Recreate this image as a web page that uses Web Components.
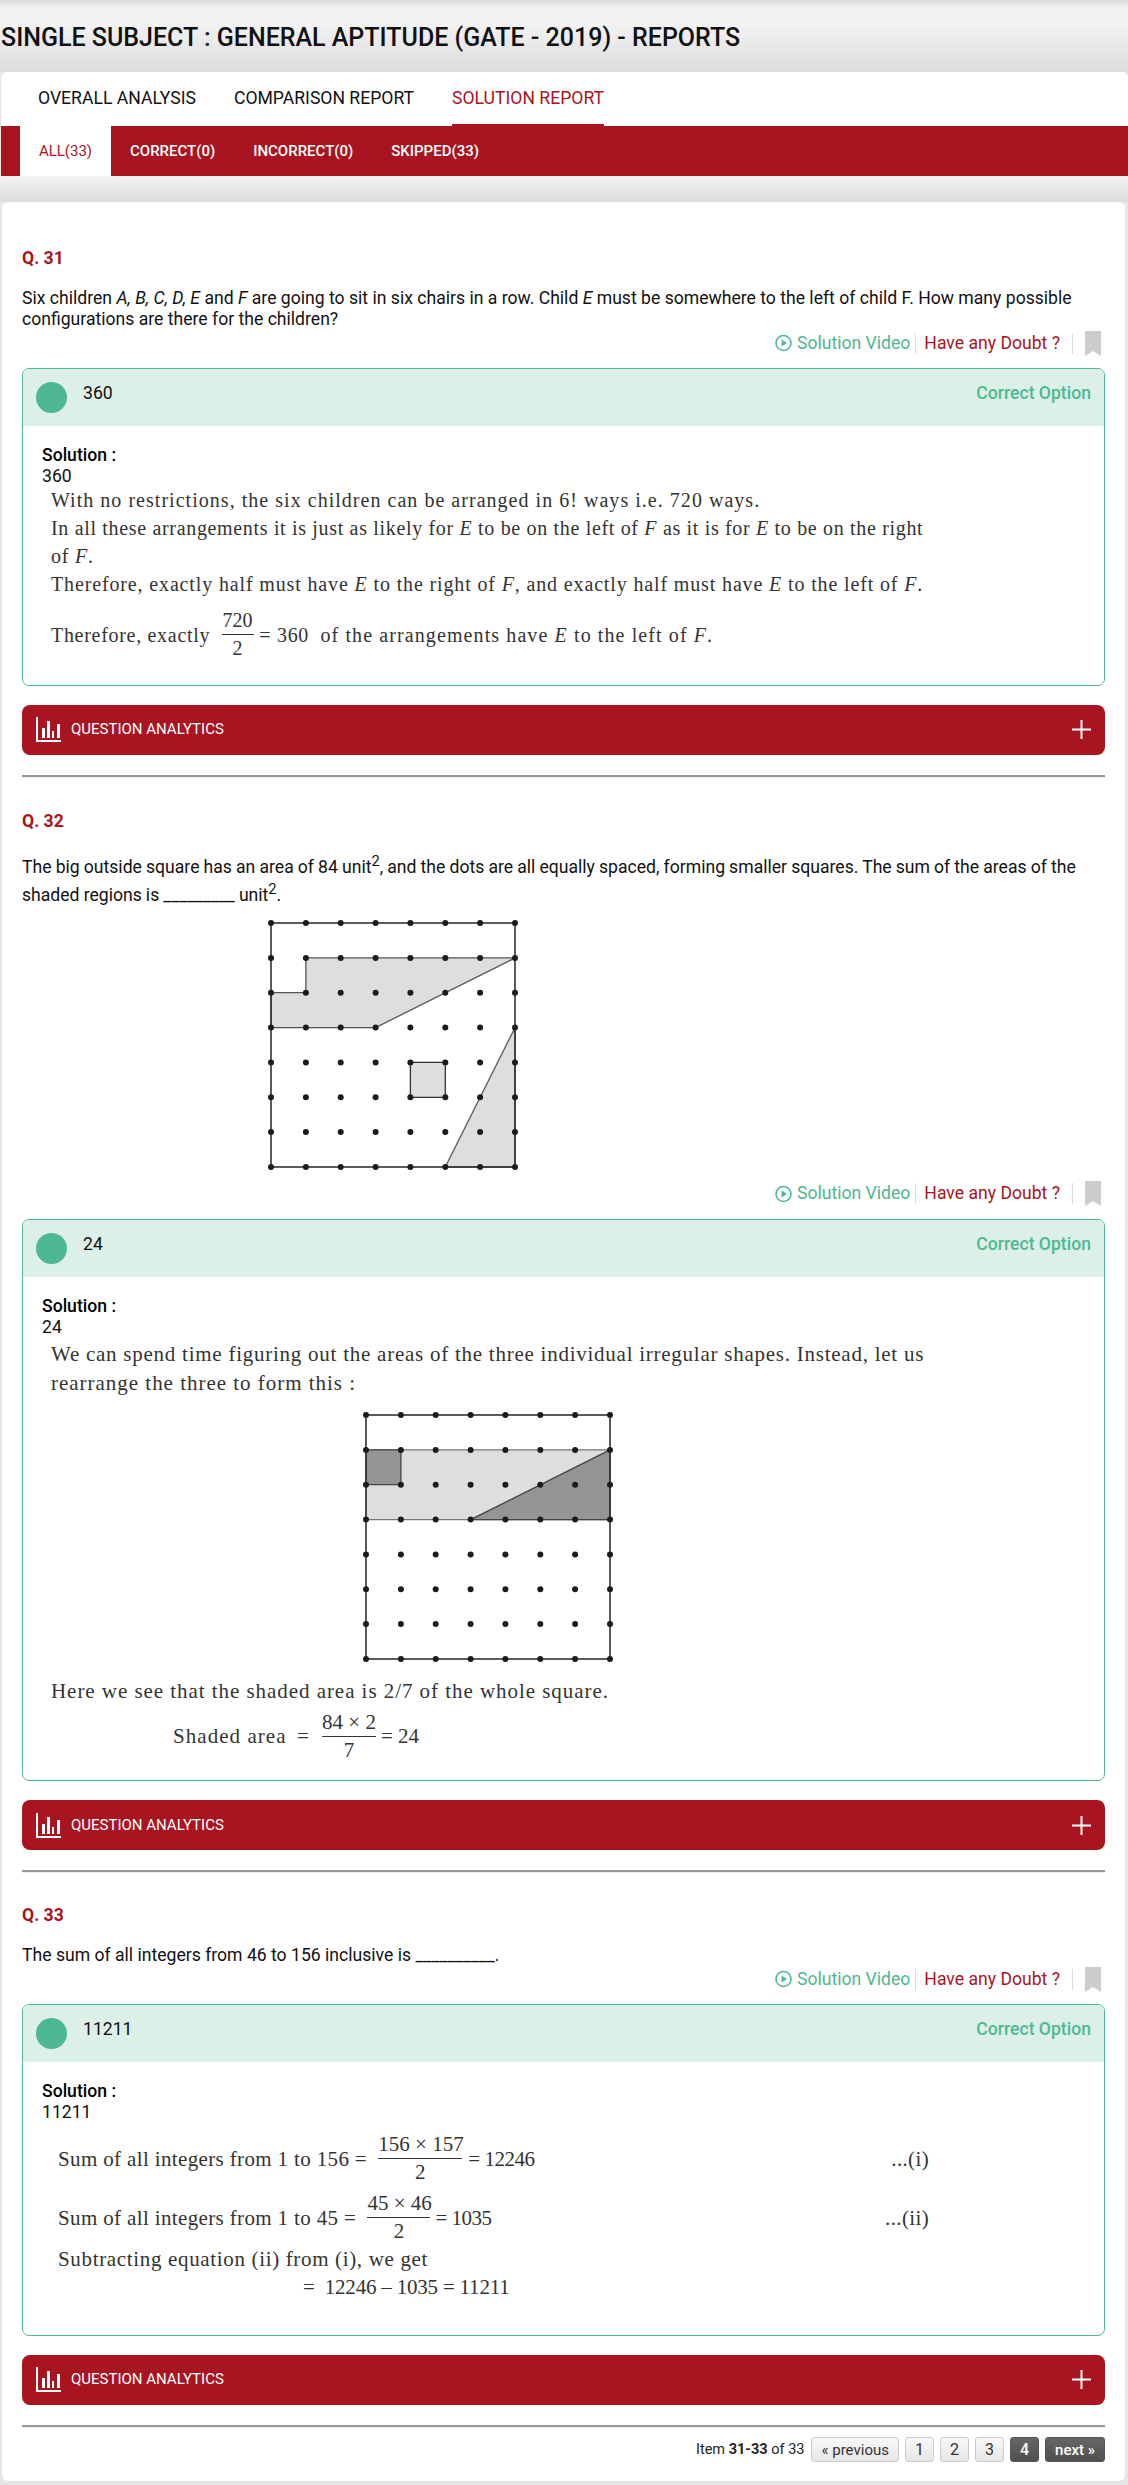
<!DOCTYPE html>
<html>
<head>
<meta charset="utf-8">
<title>Reports</title>
<style>
    html, body { margin: 0; padding: 0; }
    body {
        background: #e6e6e6;
        font-family: Roboto, "Liberation Sans", sans-serif;
        color: #111;
    }
    sup { line-height: 0; }
</style>
</head>
<body>
<report-page>
    <report-tabs></report-tabs>
    <report-subtabs></report-subtabs>

    <report-card>
        <question-item label="Q. 31" top="46">
            <p>Six children <i>A, B, C, D, E</i> and <i>F</i> are going to sit in six chairs in a row. Child <i>E</i> must be somewhere to the left of child F. How many possible configurations are there for the children?</p>
            <answer-box answer="360" slot="answer" pad="22.5">
                <sol-line size="20" sp="1.03" top="-1">With no restrictions, the six children can be arranged in 6! ways i.e. 720 ways.</sol-line>
                <sol-line size="20" sp="0.67">In all these arrangements it is just as likely for <i>E</i> to be on the left of <i>F</i> as it is for <i>E</i> to be on the right</sol-line>
                <sol-line size="20" sp="0.8">of <i>F</i>.</sol-line>
                <sol-line size="20" sp="0.86">Therefore, exactly half must have <i>E</i> to the right of <i>F</i>, and exactly half must have <i>E</i> to the left of <i>F</i>.</sol-line>
                <sol-line size="20" sp="0.7" top="9">Therefore, exactly&nbsp;&nbsp;<math-frac top="720" bottom="2" width="32"></math-frac>&nbsp;= 360&nbsp;&nbsp;<span style="letter-spacing:1.1px">of the arrangements have <i>E</i> to the left of <i>F</i>.</span></sol-line>
            </answer-box>
        </question-item>

        <question-item label="Q. 32" top="33" tall>
            <p style="word-spacing:-.25px">The big outside square has an area of 84 unit<sup>2</sup>, and the dots are all equally spaced, forming smaller squares. The sum of the areas of the shaded regions is _________ unit<sup>2</sup>.</p>
            <dot-figure variant="question" left="245" gap="10"></dot-figure>
            <answer-box answer="24" slot="answer" pad="16.5">
                <sol-line size="21" sp="0.75" top="2">We can spend time figuring out the areas of the three individual irregular shapes. Instead, let us</sol-line>
                <sol-line size="21" sp="0.98" top="1">rearrange the three to form this :</sol-line>
                <dot-figure variant="solution" left="320" gap="14"></dot-figure>
                <sol-line size="21" sp="0.95" top="0">Here we see that the shaded area is 2/7 of the whole square.</sol-line>
                <sol-line size="21" sp="0" left="131" top="4"><span style="width:124px;letter-spacing:1.05px">Shaded area</span><span style="width:25px">=</span><math-frac top="84 × 2" bottom="7" width="54"></math-frac><span style="margin-left:5px">= 24</span></sol-line>
            </answer-box>
        </question-item>

        <question-item label="Q. 33" top="32">
            <p>The sum of all integers from 46 to 156 inclusive is __________.</p>
            <answer-box answer="11211" slot="answer" pad="33.5">
                <sol-line size="21" sp="0.36" left="16" top="8">Sum of all integers from 1 to 156 =&nbsp;&nbsp;<math-frac top="156 × 157" bottom="2" width="84"></math-frac><span style="margin-left:6px;letter-spacing:-.5px">= 12246</span><span style="margin-left:auto;margin-right:175px">...(i)</span></sol-line>
                <sol-line size="21" sp="0.36" left="16" top="4">Sum of all integers from 1 to 45 =&nbsp;&nbsp;<math-frac top="45 × 46" bottom="2" width="63"></math-frac><span style="margin-left:5px;letter-spacing:-.5px">= 1035</span><span style="margin-left:auto;margin-right:175px">...(ii)</span></sol-line>
                <sol-line size="21" sp="0.66" left="16" top="0">Subtracting equation (ii) from (i), we get</sol-line>
                <sol-line size="21" sp="-0.2" left="261" top="0">=&nbsp;&nbsp;12246 – 1035 = 11211</sol-line>
            </answer-box>
        </question-item>

        <report-pager></report-pager>
    </report-card>
</report-page>

<script>
const RED = '#a91421';
const GREEN = '#4db892';

class ReportPage extends HTMLElement {
    constructor() {
        super();
        this.attachShadow({ mode: 'open' });
    }

    connectedCallback() {
        this.shadowRoot.innerHTML = `
            <style>
                :host {
                    display: block;
                    height: 2485px;
                    overflow: hidden;
                    background:
                        linear-gradient(#f2f2f2, #dcdcdc) 0 176px / 100% 26px no-repeat,
                        linear-gradient(#dcdcdc 0, #f2f2f2 8px, #f2f2f2 24px, #dcdcdc 72px) 0 0 / 100% 72px no-repeat,
                        #e6e6e6;
                }
                h1 {
                    margin: 0;
                    padding: 24px 0 0 1px;
                    height: 48px;
                    box-sizing: border-box;
                    font-size: 25px;
                    line-height: 28px;
                    font-weight: 500;
                    color: #111;
                }
            </style>
            <h1>SINGLE SUBJECT : GENERAL APTITUDE (GATE - 2019) - REPORTS</h1>
            <slot></slot>
        `;
    }
}

class ReportTabs extends HTMLElement {
    constructor() {
        super();
        this.attachShadow({ mode: 'open' });
    }

    connectedCallback() {
        this.shadowRoot.innerHTML = `
            <style>
                :host {
                    display: flex;
                    height: 54px;
                    margin: 24px 0 0 1px;
                    padding-left: 18px;
                    background: #fff;
                    border-radius: 6px 6px 0 0;
                    font-size: 17.6px;
                    line-height: 52px;
                }
                span { padding: 0 19px; color: #111; }
                span.on { color: ${RED}; padding: 0; margin: 0 19px; height: 52px; border-bottom: 2px solid ${RED}; }
            </style>
            <span>OVERALL ANALYSIS</span>
            <span>COMPARISON REPORT</span>
            <span class="on">SOLUTION REPORT</span>
        `;
    }
}

class ReportSubtabs extends HTMLElement {
    constructor() {
        super();
        this.attachShadow({ mode: 'open' });
    }

    connectedCallback() {
        this.shadowRoot.innerHTML = `
            <style>
                :host {
                    display: flex;
                    height: 50px;
                    margin-left: 1px;
                    padding-left: 19px;
                    background: ${RED};
                    font-size: 15px;
                    line-height: 50px;
                    font-weight: 500;
                    color: #fff;
                }
                span { padding: 0 19px; }
                .on { background: #fff; color: ${RED}; font-weight: 400; padding: 0; width: 91px; text-align: center; }
            </style>
            <span class="on">ALL(33)</span>
            <span>CORRECT(0)</span>
            <span>INCORRECT(0)</span>
            <span>SKIPPED(33)</span>
        `;
    }
}

class ReportCard extends HTMLElement {
    constructor() {
        super();
        this.attachShadow({ mode: 'open' });
    }

    connectedCallback() {
        this.shadowRoot.innerHTML = `
            <style>
                :host {
                    display: block;
                    height: 2279px;
                    box-sizing: border-box;
                    margin: 26px 3px 0 2px;
                    padding: 0 20px;
                    background: #fff;
                    border-radius: 6px;
                }
            </style>
            <slot></slot>
        `;
    }
}

class QuestionItem extends HTMLElement {
    constructor() {
        super();
        this.attachShadow({ mode: 'open' });
    }

    connectedCallback() {
        const label = this.getAttribute('label');
        const top = this.getAttribute('top');
        const tall = this.hasAttribute('tall');

        this.shadowRoot.innerHTML = `
            <style>
                :host {
                    display: block;
                    font-size: 17.6px;
                    line-height: 21px;
                    padding-top: ${top}px;
                }
                .label {
                    font-weight: 700;
                    color: ${RED};
                    line-height: 20px;
                    margin-bottom: ${tall ? 22 : 20}px;
                }
                .text { line-height: ${tall ? 28 : 21}px; color: #111; }
                ::slotted(p) { margin: 0; }
                .actions {
                    display: flex;
                    justify-content: flex-end;
                    align-items: center;
                    height: 26px;
                    margin-bottom: 12px;
                    padding-right: 4px;
                }
                .video { display: flex; align-items: center; color: ${GREEN}; gap: 5px; padding-right: 5px; border-right: 1px solid #ddd; line-height: 21px; }
                .doubt { color: ${RED}; padding: 0 12px 0 8px; border-right: 1px solid #ddd; line-height: 21px; }
                .mark { margin-left: 12px; display: block; }
                .bar {
                    display: flex;
                    align-items: center;
                    height: 50px;
                    margin-top: 19px;
                    padding: 0 14px;
                    background: ${RED};
                    border-radius: 8px;
                    color: #fff;
                    font-size: 15px;
                }
                .bar svg.chart { margin-right: 10px; }
                .bar svg.plus { margin-left: auto; }
                hr {
                    margin: 20px 0 0;
                    border: 0;
                    border-top: 2px solid #999;
                    border-bottom: 1px solid #eee;
                }
            </style>
            <div class="label">${label}</div>
            <div class="text"><slot></slot></div>
            <div class="actions">
                <div class="video">
                    <svg width="17" height="18" viewBox="0 0 17 18">
                        <circle cx="8.5" cy="9" r="7.5" fill="none" stroke="${GREEN}" stroke-width="1.6"/>
                        <path d="M6.5 5.5 L12 9 L6.5 12.5 Z" fill="${GREEN}"/>
                    </svg>
                    Solution Video
                </div>
                <div class="doubt">Have any Doubt ?</div>
                <svg class="mark" width="16" height="25" viewBox="0 0 16 25"><path d="M0 0 H16 V25 L8 20 L0 25 Z" fill="#ccc"/></svg>
            </div>
            <slot name="answer"></slot>
            <div class="bar">
                <svg class="chart" width="25" height="25" viewBox="0 0 25 25">
                    <path d="M0 0 H2 V23 H25 V25 H0 Z M6 11 H9 V21 H6 Z M11 4 H14 V21 H11 Z M16 14 H18 V21 H16 Z M21 7 H24 V21 H21 Z" fill="#fff"/>
                </svg>
                QUESTION ANALYTICS
                <svg class="plus" width="19" height="19" viewBox="0 0 19 19"><path d="M8.5 0 H10.5 V8.5 H19 V10.5 H10.5 V19 H8.5 V10.5 H0 V8.5 H8.5 Z" fill="#fff"/></svg>
            </div>
            <hr>
        `;
    }
}

class AnswerBox extends HTMLElement {
    constructor() {
        super();
        this.attachShadow({ mode: 'open' });
    }

    connectedCallback() {
        const answer = this.getAttribute('answer');

        this.shadowRoot.innerHTML = `
            <style>
                :host {
                    display: block;
                    border: 1px solid ${GREEN};
                    border-radius: 7px;
                    overflow: hidden;
                    padding-bottom: ${this.getAttribute('pad')}px;
                }
                .head {
                    display: flex;
                    height: 57px;
                    padding: 14px 13px 0;
                    box-sizing: border-box;
                    background: #dcf0e8;
                    font-size: 17.6px;
                    line-height: 21px;
                }
                .dot {
                    width: 31px;
                    height: 31px;
                    margin-top: -1px;
                    border-radius: 50%;
                    background: ${GREEN};
                    margin-right: 16px;
                }
                .right { margin-left: auto; color: ${GREEN}; font-weight: 500; }
                .sol {
                    padding: 19px 0 0 19px;
                    font-size: 17.6px;
                    line-height: 21px;
                }
                b { font-weight: 500; display: block; color: #000; }
            </style>
            <div class="head">
                <div class="dot"></div>
                <div>${answer}</div>
                <div class="right">Correct Option</div>
            </div>
            <div class="sol">
                <b>Solution :</b>
                <div>${answer}</div>
                <slot></slot>
            </div>
        `;
    }
}

class SolLine extends HTMLElement {
    constructor() {
        super();
        this.attachShadow({ mode: 'open' });
    }

    connectedCallback() {
        const left = this.getAttribute('left') || 9;
        const top = this.getAttribute('top') || 0;

        this.shadowRoot.innerHTML = `
            <style>
                :host {
                    display: block;
                    font-family: "Liberation Serif", "Times New Roman", serif;
                    font-size: ${this.getAttribute('size')}px;
                    letter-spacing: ${this.getAttribute('sp')}px;
                    line-height: 28px;
                    color: #333;
                    margin-left: ${left}px;
                    margin-top: ${top}px;
                }
                div { display: flex; align-items: center; white-space: pre; }
            </style>
            <div><slot></slot></div>
        `;
    }
}

class MathFrac extends HTMLElement {
    constructor() {
        super();
        this.attachShadow({ mode: 'open' });
    }

    connectedCallback() {
        const w = this.getAttribute('width');

        this.shadowRoot.innerHTML = `
            <style>
                :host {
                    display: inline-flex;
                    flex-direction: column;
                    align-items: center;
                    width: ${w}px;
                    line-height: 27px;
                    letter-spacing: 0;
                }
                div { white-space: nowrap; }
                .top { border-bottom: 1.5px solid #333; width: 100%; text-align: center; }
            </style>
            <div class="top">${this.getAttribute('top')}</div>
            <div>${this.getAttribute('bottom')}</div>
        `;
    }
}

class DotFigure extends HTMLElement {
    constructor() {
        super();
        this.attachShadow({ mode: 'open' });
    }

    connectedCallback() {
        const step = 244 / 7;
        const p = (x, y) => `${(4 + x * step).toFixed(1)},${(4 + y * step).toFixed(1)}`;
        const poly = (pts, fill, stroke) =>
            `<polygon points="${pts.map(q => p(q[0], q[1])).join(' ')}" fill="${fill}" stroke="${stroke}" stroke-width="1.3"/>`;

        let shapes = '';
        if (this.getAttribute('variant') === 'question') {
            shapes += poly([[1, 1], [7, 1], [3, 3], [0, 3], [0, 2], [1, 2]], '#dedede', '#555');
            shapes += poly([[4, 4], [5, 4], [5, 5], [4, 5]], '#dedede', '#333');
            shapes += poly([[7, 3], [7, 7], [5, 7]], '#dedede', '#555');
        } else {
            shapes += poly([[0, 1], [7, 1], [7, 3], [0, 3]], '#dedede', '#777');
            shapes += poly([[0, 1], [1, 1], [1, 2], [0, 2]], '#959595', '#444');
            shapes += poly([[7, 1], [7, 3], [3, 3]], '#959595', '#444');
        }

        let dots = '';
        for (let y = 0; y < 8; y++) {
            for (let x = 0; x < 8; x++) {
                const c = p(x, y).split(',');
                dots += `<circle cx="${c[0]}" cy="${c[1]}" r="3" fill="#1c1c1c"/>`;
            }
        }

        const gap = this.getAttribute('gap');
        this.shadowRoot.innerHTML = `
            <style>
                :host {
                    display: block;
                    margin: ${gap}px 0 ${gap}px ${this.getAttribute('left')}px;
                    height: 252px;
                }
                svg { display: block; }
            </style>
            <svg width="252" height="252" viewBox="0 0 252 252">
                ${shapes}
                <rect x="4" y="4" width="244" height="244" fill="none" stroke="#333" stroke-width="1.6"/>
                ${dots}
            </svg>
        `;
    }
}

class ReportPager extends HTMLElement {
    constructor() {
        super();
        this.attachShadow({ mode: 'open' });
    }

    connectedCallback() {
        this.shadowRoot.innerHTML = `
            <style>
                :host {
                    display: flex;
                    justify-content: flex-end;
                    align-items: center;
                    gap: 6px;
                    margin-top: 9px;
                    font-size: 14.5px;
                    color: #222;
                }
                .info { margin-right: 1px; }
                b { font-weight: 700; }
                a {
                    display: block;
                    height: 25px;
                    line-height: 24px;
                    padding: 0 9px;
                    font-size: 16px;
                    border: 1px solid #ccc;
                    border-radius: 3px;
                    background: linear-gradient(#f8f8f8, #e6e6e6);
                    box-sizing: border-box;
                    color: #333;
                }
                a.dark {
                    background: linear-gradient(#666, #505050);
                    border-color: #555;
                    color: #fff;
                    font-weight: 500;
                }
                a.small { font-size: 15px; }
            </style>
            <span class="info">Item <b>31-33</b> of 33</span>
            <a class="small">« previous</a><a>1</a><a>2</a><a>3</a><a class="dark">4</a><a class="dark small">next »</a>
        `;
    }
}

customElements.define('report-page', ReportPage);
customElements.define('report-tabs', ReportTabs);
customElements.define('report-subtabs', ReportSubtabs);
customElements.define('report-card', ReportCard);
customElements.define('question-item', QuestionItem);
customElements.define('answer-box', AnswerBox);
customElements.define('sol-line', SolLine);
customElements.define('math-frac', MathFrac);
customElements.define('dot-figure', DotFigure);
customElements.define('report-pager', ReportPager);
</script>
</body>
</html>
